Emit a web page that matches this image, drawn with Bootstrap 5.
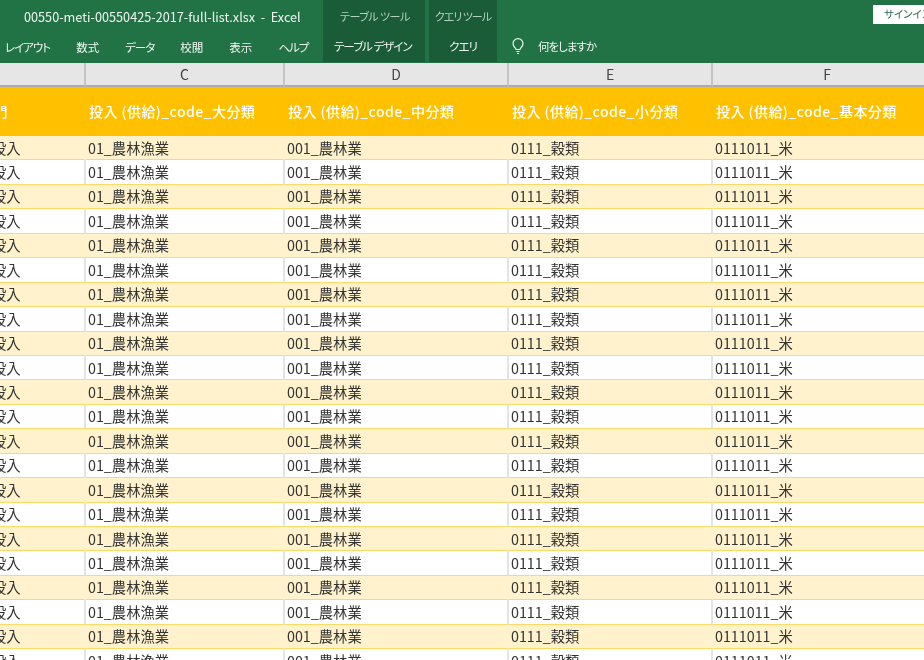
<!DOCTYPE html>
<html lang="ja">
<head>
<meta charset="utf-8">
<title>Excel</title>
<link rel="stylesheet" href="https://cdn.jsdelivr.net/npm/bootstrap@5.3.0/dist/css/bootstrap.min.css">
<style>
html,body{height:660px;overflow:hidden;background:#fff}
body{font-family:"Noto Sans CJK JP","Noto Sans",sans-serif;filter:blur(.35px)}
.ribbon{height:63px;background:#217346;color:#f1f6f3;font-size:11.500px;line-height:1;font-feature-settings:"palt";overflow:hidden}
.kana{letter-spacing:-1px}
.rb-main{width:323px}
.rb-title{height:35px;padding-left:24px;font-size:12.700px;white-space:pre}
.rb-tabs{height:28px;padding-left:5px;gap:26px;padding-bottom:2px}
.tool{background:#1b5c38;height:62px}
.tool-a{width:102px;margin-right:4px}
.tool-b{width:68px}
.tool-label{height:33px;color:#b5cfc0;font-size:11px}
.tool-a .tool-label{padding-left:17px;letter-spacing:-.5px}
.tool-a .tool-tab{padding-left:11px}
.tool-tab{height:29px;padding-bottom:2px}
.rb-right{min-width:0}
.rb-sign{height:33px}
.signin{background:#fff;color:#2d6a49;flex:0 0 60px;height:19px;margin-top:5px;margin-right:-9px;font-size:10.500px;padding-left:11px;white-space:nowrap;overflow:hidden}
.rb-tell{height:29px;padding-left:15px;gap:14px;padding-bottom:2px}
.sheet{overflow:hidden;height:597px}
.sheet table{table-layout:fixed;width:983px;margin-left:-40px;margin-bottom:0;border-collapse:separate;border-spacing:0;color:#333;font-size:14.300px}
.sheet th,.sheet td{padding:0 0 0 2px;white-space:nowrap;overflow:hidden;vertical-align:middle;box-sizing:border-box;border:0}
.col-b{width:126px}.col-c{width:199px}.col-d{width:224px}.col-e{width:204px}.col-f{width:230px}
.letters th{height:24px;background:#e6e6e6;color:#444;font-weight:400;font-size:14px;text-align:center;border-right:2px solid #c4c4c4;border-bottom:2px solid #ababab;padding:0}
.head th{height:49px;background:#ffc000;color:#fff;font-weight:500;font-size:14px;padding-left:3px;letter-spacing:.45px}
.head th.col-first{padding-left:19px}
.sheet tbody td{height:24.450px;background:#fff;border-bottom:1px solid #ffd966;border-right:2px solid #e4e4e4;line-height:1}
.sheet tbody tr:nth-child(odd) td{background:#fff2cc;border-right-color:#fff2cc}
.sheet tbody td.first{padding-left:32px}
</style>
</head>
<body>
<header class="ribbon d-flex">
  <div class="rb-main d-flex flex-column">
    <div class="rb-title d-flex align-items-center">00550-meti-00550425-2017-full-list.xlsx  -  Excel</div>
    <nav class="rb-tabs d-flex align-items-center"><span class="kana">レイアウト</span><span>数式</span><span class="kana">データ</span><span>校閲</span><span>表示</span><span class="kana">ヘルプ</span></nav>
  </div>
  <div class="tool tool-a d-flex flex-column">
    <div class="tool-label d-flex align-items-center">テーブル ツール</div>
    <div class="tool-tab kana d-flex align-items-center">テーブル デザイン</div>
  </div>
  <div class="tool tool-b d-flex flex-column">
    <div class="tool-label kana d-flex align-items-center justify-content-center">クエリ ツール</div>
    <div class="tool-tab kana d-flex align-items-center justify-content-center">クエリ</div>
  </div>
  <div class="rb-right flex-grow-1 d-flex flex-column">
    <div class="rb-sign d-flex justify-content-end"><div class="signin d-flex align-items-center">サインイン</div></div>
    <div class="rb-tell d-flex align-items-center">
      <svg width="12" height="17" viewBox="0 0 12 17" fill="none" stroke="#f1f6f3" stroke-width="1.2"><path d="M4 11.5C3.6 9.6 1 8.6 1 5.6a5 5 0 0 1 10 0c0 3-2.600 4-3 5.900z"/><path d="M4.500 13.500h3M5 15.500h2"/></svg>
      <span class="kana">何をしますか</span>
    </div>
  </div>
</header>
<main class="sheet">
<table class="table">
<colgroup><col class="col-b"><col class="col-c"><col class="col-d"><col class="col-e"><col class="col-f"></colgroup>
<thead>
<tr class="letters"><th></th><th>C</th><th>D</th><th>E</th><th>F</th></tr>
<tr class="head"><th class="col-first">部門</th><th>投入 (供給)_code_大分類</th><th>投入 (供給)_code_中分類</th><th>投入 (供給)_code_小分類</th><th>投入 (供給)_code_基本分類</th></tr>
</thead>
<tbody>
<tr><td class="first">投入</td><td>01_農林漁業</td><td>001_農林業</td><td>0111_穀類</td><td>0111011_米</td></tr>
<tr><td class="first">投入</td><td>01_農林漁業</td><td>001_農林業</td><td>0111_穀類</td><td>0111011_米</td></tr>
<tr><td class="first">投入</td><td>01_農林漁業</td><td>001_農林業</td><td>0111_穀類</td><td>0111011_米</td></tr>
<tr><td class="first">投入</td><td>01_農林漁業</td><td>001_農林業</td><td>0111_穀類</td><td>0111011_米</td></tr>
<tr><td class="first">投入</td><td>01_農林漁業</td><td>001_農林業</td><td>0111_穀類</td><td>0111011_米</td></tr>
<tr><td class="first">投入</td><td>01_農林漁業</td><td>001_農林業</td><td>0111_穀類</td><td>0111011_米</td></tr>
<tr><td class="first">投入</td><td>01_農林漁業</td><td>001_農林業</td><td>0111_穀類</td><td>0111011_米</td></tr>
<tr><td class="first">投入</td><td>01_農林漁業</td><td>001_農林業</td><td>0111_穀類</td><td>0111011_米</td></tr>
<tr><td class="first">投入</td><td>01_農林漁業</td><td>001_農林業</td><td>0111_穀類</td><td>0111011_米</td></tr>
<tr><td class="first">投入</td><td>01_農林漁業</td><td>001_農林業</td><td>0111_穀類</td><td>0111011_米</td></tr>
<tr><td class="first">投入</td><td>01_農林漁業</td><td>001_農林業</td><td>0111_穀類</td><td>0111011_米</td></tr>
<tr><td class="first">投入</td><td>01_農林漁業</td><td>001_農林業</td><td>0111_穀類</td><td>0111011_米</td></tr>
<tr><td class="first">投入</td><td>01_農林漁業</td><td>001_農林業</td><td>0111_穀類</td><td>0111011_米</td></tr>
<tr><td class="first">投入</td><td>01_農林漁業</td><td>001_農林業</td><td>0111_穀類</td><td>0111011_米</td></tr>
<tr><td class="first">投入</td><td>01_農林漁業</td><td>001_農林業</td><td>0111_穀類</td><td>0111011_米</td></tr>
<tr><td class="first">投入</td><td>01_農林漁業</td><td>001_農林業</td><td>0111_穀類</td><td>0111011_米</td></tr>
<tr><td class="first">投入</td><td>01_農林漁業</td><td>001_農林業</td><td>0111_穀類</td><td>0111011_米</td></tr>
<tr><td class="first">投入</td><td>01_農林漁業</td><td>001_農林業</td><td>0111_穀類</td><td>0111011_米</td></tr>
<tr><td class="first">投入</td><td>01_農林漁業</td><td>001_農林業</td><td>0111_穀類</td><td>0111011_米</td></tr>
<tr><td class="first">投入</td><td>01_農林漁業</td><td>001_農林業</td><td>0111_穀類</td><td>0111011_米</td></tr>
<tr><td class="first">投入</td><td>01_農林漁業</td><td>001_農林業</td><td>0111_穀類</td><td>0111011_米</td></tr>
<tr><td class="first">投入</td><td>01_農林漁業</td><td>001_農林業</td><td>0111_穀類</td><td>0111011_米</td></tr>
</tbody>
</table>
</main>
<script src="https://cdn.jsdelivr.net/npm/bootstrap@5.3.0/dist/js/bootstrap.bundle.min.js"></script>
</body>
</html>
